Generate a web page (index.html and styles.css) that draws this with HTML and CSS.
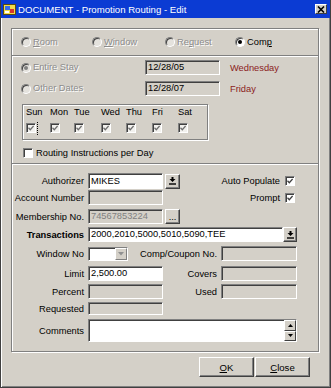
FILE: index.html
```html
<!doctype html>
<html lang="en">
<head>
	<meta charset="UTF-8">
	<title>DOCUMENT - Promotion Routing - Edit</title>
	<link rel="stylesheet" href="styles.css">
</head>
<body>

<div class="window">

	<div class="titlebar">
		<svg class="app-icon" width="13" height="13" viewBox="0 0 13 13">
			<rect x="0.5" y="1.5" width="12" height="10" fill="#f2dc4a" stroke="#5a4a10"/>
			<rect x="2" y="3" width="5" height="4" fill="#3a6ee8"/>
			<rect x="7" y="6" width="4" height="4" fill="#d8342c"/>
			<rect x="2" y="8" width="4" height="2" fill="#fff"/>
		</svg>
		<span class="title">DOCUMENT - Promotion Routing - Edit</span>
		<span class="tb-close">
			<svg width="8" height="7" viewBox="0 0 8 7"><path d="M1 0.5 L7 6.5 M7 0.5 L1 6.5" stroke="#000" stroke-width="1.6"/></svg>
		</span>
	</div>

	<div class="content">

		<div class="panel">

			<!-- routing type -->
			<div class="sect types">
				<div class="opt"><span class="radio off"></span><span class="dim"><u>R</u>oom</span></div>
				<div class="opt"><span class="radio off"></span><span class="dim"><u>W</u>indow</span></div>
				<div class="opt"><span class="radio off"></span><span class="dim">Re<u>q</u>uest</span></div>
				<div class="opt"><span class="radio on"></span><span>Com<u>p</u></span></div>
			</div>

			<!-- dates -->
			<div class="sect dates">
				<div class="date-row">
					<div class="opt"><span class="radio off on"></span><span class="dim">Entire Stay</span></div>
					<div class="field off">12/28/05</div>
					<span class="weekday">Wednesday</span>
				</div>
				<div class="date-row gap">
					<div class="opt"><span class="radio off"></span><span class="dim">Other Dates</span></div>
					<div class="field off">12/28/07</div>
					<span class="weekday">Friday</span>
				</div>

				<div class="days">
					<span>Sun</span><span>Mon</span><span>Tue</span><span>Wed</span><span>Thu</span><span>Fri</span><span>Sat</span>
					<span class="check day focus"><svg width="6" height="6" viewBox="0 0 6 6"><polyline points="0.5,2.8 2.3,4.7 5.6,1" fill="none" stroke="#707070" stroke-width="1.3"/></svg></span>
					<span class="check day"><svg width="6" height="6" viewBox="0 0 6 6"><polyline points="0.5,2.8 2.3,4.7 5.6,1" fill="none" stroke="#707070" stroke-width="1.3"/></svg></span>
					<span class="check day"><svg width="6" height="6" viewBox="0 0 6 6"><polyline points="0.5,2.8 2.3,4.7 5.6,1" fill="none" stroke="#707070" stroke-width="1.3"/></svg></span>
					<span class="check day"><svg width="6" height="6" viewBox="0 0 6 6"><polyline points="0.5,2.8 2.3,4.7 5.6,1" fill="none" stroke="#707070" stroke-width="1.3"/></svg></span>
					<span class="check day"><svg width="6" height="6" viewBox="0 0 6 6"><polyline points="0.5,2.8 2.3,4.7 5.6,1" fill="none" stroke="#707070" stroke-width="1.3"/></svg></span>
					<span class="check day"><svg width="6" height="6" viewBox="0 0 6 6"><polyline points="0.5,2.8 2.3,4.7 5.6,1" fill="none" stroke="#707070" stroke-width="1.3"/></svg></span>
					<span class="check day"><svg width="6" height="6" viewBox="0 0 6 6"><polyline points="0.5,2.8 2.3,4.7 5.6,1" fill="none" stroke="#707070" stroke-width="1.3"/></svg></span>
				</div>

				<div class="per-day">
					<span class="check"></span>
					<span>Routing Instructions per Day</span>
				</div>
			</div>

			<!-- details -->
			<div class="sect form">
				<div class="row">
					<span class="lbl">Authorizer</span>
					<div class="field w75 tall">MIKES</div>
					<span class="btn ml2"><svg width="7" height="8" viewBox="0 0 7 8"><path d="M2.5 0h2v2h2L3.5 5 0.5 2h2z" fill="#000"/><rect y="6.3" width="7" height="1.4" fill="#000"/></svg></span>
					<span class="side">Auto Populate</span>
					<span class="check opt-check"><svg width="6" height="6" viewBox="0 0 6 6"><polyline points="0.5,2.8 2.3,4.7 5.6,1" fill="none" stroke="#404040" stroke-width="1.3"/></svg></span>
				</div>
				<div class="row">
					<span class="lbl">Account Number</span>
					<div class="field w75 off"></div>
					<span class="side">Prompt</span>
					<span class="check opt-check"><svg width="6" height="6" viewBox="0 0 6 6"><polyline points="0.5,2.8 2.3,4.7 5.6,1" fill="none" stroke="#404040" stroke-width="1.3"/></svg></span>
				</div>
				<div class="row">
					<span class="lbl">Membership No.</span>
					<div class="field w75 off grey-text">74567853224</div>
					<span class="btn ml2 dots">...</span>
				</div>
				<div class="row">
					<span class="lbl bold">Transactions</span>
					<div class="field grow">2000,2010,5000,5010,5090,TEE</div>
					<span class="btn narrow"><svg width="7" height="8" viewBox="0 0 7 8"><path d="M2.5 0h2v2h2L3.5 5 0.5 2h2z" fill="#000"/><rect y="6.3" width="7" height="1.4" fill="#000"/></svg></span>
				</div>
				<div class="row">
					<span class="lbl">Window No</span>
					<div class="field select">
						<span class="select-btn"><svg width="6" height="4" viewBox="0 0 6 4"><path d="M0 0h6L3 3.5z" fill="#909090"/></svg></span>
					</div>
					<span class="side mr4">Comp/Coupon No.</span>
					<div class="field w76 off"></div>
				</div>
				<div class="row">
					<span class="lbl">Limit</span>
					<div class="field w75">2,500.00</div>
					<span class="side mr4">Covers</span>
					<div class="field w76 off"></div>
				</div>
				<div class="row">
					<span class="lbl">Percent</span>
					<div class="field w75 off"></div>
					<span class="side mr4">Used</span>
					<div class="field w76 off"></div>
				</div>
				<div class="row">
					<span class="lbl">Requested</span>
					<div class="field w75 off short"></div>
				</div>
				<div class="row">
					<span class="lbl">Comments</span>
					<div class="field grow comments">
						<span class="spin">
							<span class="spin-btn"><svg width="5" height="3" viewBox="0 0 5 3"><path d="M0 3h5L2.5 0z" fill="#000"/></svg></span>
							<span class="spin-btn"><svg width="5" height="3" viewBox="0 0 5 3"><path d="M0 0h5L2.5 3z" fill="#000"/></svg></span>
						</span>
					</div>
				</div>
			</div>

		</div>

		<div class="actions">
			<button class="push"><u>O</u>K</button>
			<button class="push"><u>C</u>lose</button>
		</div>

	</div>

</div>

</body>
</html>
```

FILE: styles.css
```css
* {
	box-sizing: border-box;
}

body {
	margin: 0;
	background: #d4d0c8;
	font-family: "Liberation Sans", Arial, sans-serif;
	font-size: 9.3px;
	color: #000;
}

.window {
	width: 331px;
	height: 388px;
	border: 1px solid #404040;
	border-top: 0;
	background: #d4d0c8;
	box-shadow: inset 1px 0 #fff, inset -1px -1px #808080;
}

/*标题栏*/
.titlebar {
	height: 18px;
	background: #0b3bd3;
	display: flex;
	align-items: center;
	padding: 0 3px 0 2px;
	color: #fff;
}

.app-icon {
	display: block;
	margin-right: 2px;
}

.title {
	flex: 1;
	font-size: 9.6px;
}

.tb-close {
	width: 12px;
	height: 10px;
	background: #d4d0c8;
	border: 1px solid;
	border-color: #fff #404040 #404040 #fff;
	display: flex;
	align-items: center;
	justify-content: center;
}

.tb-close svg {
	display: block;
}

.content {
	padding: 10px 0 0 10px;
}

/*分组框*/
.panel {
	width: 308px;
	border: 1px solid #808080;
	box-shadow: inset 1px 1px #fff, 1px 1px #fff;
}

.sect + .sect {
	border-top: 1px solid #808080;
	box-shadow: inset 0 1px #fff;
}

.types {
	height: 26px;
	display: grid;
	grid-template-columns: 71px 73px 70px auto;
	align-items: center;
	padding-left: 9px;
}

.opt {
	display: flex;
	align-items: center;
	gap: 2px;
	line-height: 11px;
}

.radio {
	width: 10px;
	height: 10px;
	flex: none;
	border-radius: 50%;
	border: 1px solid;
	border-color: #808080 #fff #fff #808080;
	box-shadow: inset 1px 1px #404040;
	background: #fff;
	display: flex;
	align-items: center;
	justify-content: center;
}

.radio.off {
	background: #e4e2dd;
}

.radio.on::after {
	content: "";
	width: 4px;
	height: 4px;
	border-radius: 50%;
	background: #000;
}

.radio.off.on::after {
	background: #808080;
}

.dim {
	color: #8c8c8c;
	text-shadow: 1px 1px 0 #fff;
}

.dates {
	padding: 4px 0 5px 9px;
}

.date-row {
	display: flex;
	align-items: center;
	height: 15px;
}

.date-row.gap {
	margin-top: 6px;
}

.date-row .opt {
	width: 124px;
}

.weekday {
	margin-left: 10px;
	color: #8b1c1c;
}

/*输入框*/
.field {
	height: 15px;
	border: 1px solid;
	border-color: #808080 #fff #fff #808080;
	box-shadow: inset 1px 1px #404040;
	background: #fff;
	padding: 0 2px;
	line-height: 13px;
	white-space: nowrap;
	overflow: hidden;
	flex: none;
}

.date-row .field {
	width: 75px;
}

.field.off {
	background: #d4d0c8;
}

.field.tall {
	height: 16px;
	line-height: 14px;
}

.field.short {
	height: 13px;
}

.grey-text {
	color: #808080;
}

.w75 {
	width: 75px;
}

.w76 {
	width: 76px;
}

.grow {
	flex: 1;
}

.days {
	width: 186px;
	height: 36px;
	margin: 8px 0 0 1px;
	border: 1px solid #808080;
	box-shadow: inset 1px 1px #fff, 1px 1px #fff;
	padding: 2px 0 0 3px;
	display: grid;
	grid-template-columns: 24px 24px 27px 25px 26px 26px auto;
	grid-template-rows: 11px 10px;
	row-gap: 5px;
	line-height: 11px;
}

/*复选框*/
.check {
	width: 10px;
	height: 10px;
	flex: none;
	border: 1px solid;
	border-color: #808080 #fff #fff #808080;
	box-shadow: inset 1px 1px #404040;
	background: #fff;
	display: flex;
	align-items: center;
	justify-content: center;
	position: relative;
}

.check svg {
	display: block;
}

.check.day {
	background: #f2f1ee;
}

.focus::after {
	content: "";
	position: absolute;
	top: -2px;
	right: -3px;
	height: 13px;
	border-right: 1px dotted #000;
}

.per-day {
	display: flex;
	align-items: center;
	gap: 3px;
	height: 11px;
	margin: 7px 0 0 2px;
}

.form {
	padding: 9px 21px 9px 0;
	display: grid;
	grid-template-rows: 17px 19px 18px 19px 20px 18px 18px 17px 23px;
	align-items: start;
}

.row {
	display: flex;
	align-items: center;
}

.lbl {
	width: 72px;
	margin-right: 4px;
	text-align: right;
	white-space: nowrap;
	flex: none;
}

.bold {
	font-weight: bold;
}

.side {
	flex: 1;
	text-align: right;
	white-space: nowrap;
}

.mr4 {
	margin-right: 4px;
}

.opt-check {
	margin: 0 2px 0 5px;
}

/*小按钮*/
.btn {
	width: 15px;
	height: 15px;
	flex: none;
	background: #d4d0c8;
	border: 1px solid;
	border-color: #fff #404040 #404040 #fff;
	box-shadow: inset -1px -1px #808080;
	display: flex;
	align-items: center;
	justify-content: center;
}

.btn svg {
	display: block;
}

.ml2 {
	margin-left: 2px;
}

.narrow {
	width: 14px;
}

.dots {
	align-items: flex-end;
	line-height: 9px;
	padding-bottom: 1px;
}

.select {
	width: 40px;
	height: 14px;
	padding: 0;
	display: flex;
	justify-content: flex-end;
}

.select-btn {
	width: 12px;
	height: 100%;
	background: #d4d0c8;
	border: 1px solid;
	border-color: #fff #808080 #808080 #fff;
	display: flex;
	align-items: center;
	justify-content: center;
}

.select-btn svg {
	display: block;
}

.comments {
	height: 23px;
	padding: 0;
	display: flex;
	justify-content: flex-end;
}

.spin {
	width: 12px;
	display: flex;
	flex-direction: column;
}

.spin-btn {
	flex: 1;
	background: #d4d0c8;
	border: 1px solid;
	border-color: #fff #404040 #404040 #fff;
	display: flex;
	align-items: center;
	justify-content: center;
}

.spin-btn svg {
	display: block;
}

/*底部按钮*/
.actions {
	display: flex;
	justify-content: flex-end;
	gap: 1px;
	margin-top: 5px;
	padding-right: 20px;
}

.push {
	width: 55px;
	height: 20px;
	padding: 0;
	background: #d4d0c8;
	border: 1px solid;
	border-color: #fff #404040 #404040 #fff;
	box-shadow: inset -1px -1px #808080;
	font: inherit;
	font-size: 9.6px;
	color: #000;
}
```
